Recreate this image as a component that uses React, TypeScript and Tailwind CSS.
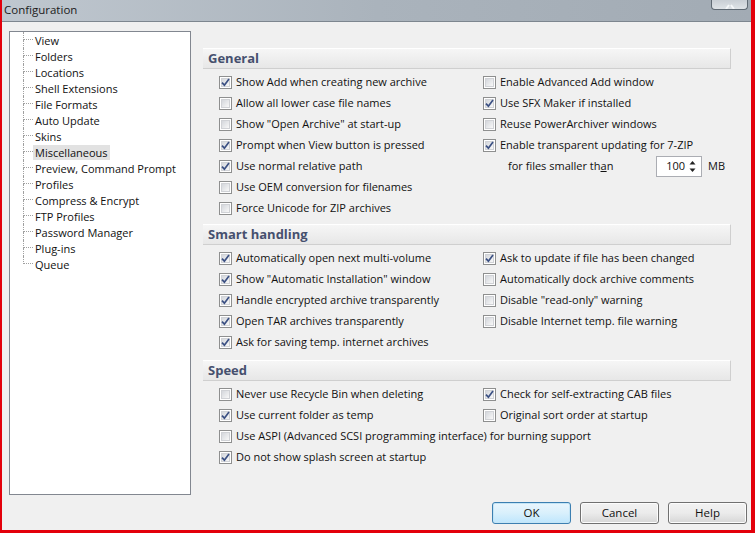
import type { ReactNode } from 'react';

const treeItems = [
  'View',
  'Folders',
  'Locations',
  'Shell Extensions',
  'File Formats',
  'Auto Update',
  'Skins',
  'Miscellaneous',
  'Preview, Command Prompt',
  'Profiles',
  'Compress & Encrypt',
  'FTP Profiles',
  'Password Manager',
  'Plug-ins',
  'Queue',
];

type Opt = [string, boolean];

const generalLeft: Opt[] = [
  ['Show Add when creating new archive', true],
  ['Allow all lower case file names', false],
  ['Show "Open Archive" at start-up', false],
  ['Prompt when View button is pressed', true],
  ['Use normal relative path', true],
  ['Use OEM conversion for filenames', false],
  ['Force Unicode for ZIP archives', false],
];

const generalRight: Opt[] = [
  ['Enable Advanced Add window', false],
  ['Use SFX Maker if installed', true],
  ['Reuse PowerArchiver windows', false],
  ['Enable transparent updating for 7-ZIP', true],
];

const smartLeft: Opt[] = [
  ['Automatically open next multi-volume', true],
  ['Show "Automatic Installation" window', true],
  ['Handle encrypted archive transparently', true],
  ['Open TAR archives transparently', true],
  ['Ask for saving temp. internet archives', true],
];

const smartRight: Opt[] = [
  ['Ask to update if file has been changed', true],
  ['Automatically dock archive comments', false],
  ['Disable "read-only" warning', false],
  ['Disable Internet temp. file warning', false],
];

function CheckBox({ checked }: { checked: boolean }) {
  return (
    <span className="flex h-[13px] w-[13px] shrink-0 border border-[#8e8f8f] bg-white p-px">
      <span className="relative flex h-full w-full items-center justify-center border border-[#d0d2d6] bg-linear-to-br from-[#d4d7dc] to-[#f8f8f8]">
        {checked && (
          <svg width="9" height="9" viewBox="0 0 9 9" className="overflow-visible">
            <path d="M1 4.6 L3.4 7.2 L8 1" fill="none" stroke="#3b5083" strokeWidth="1.7" />
          </svg>
        )}
      </span>
    </span>
  );
}

function Option({ label, checked }: { label: string; checked: boolean }) {
  return (
    <div className="flex h-[21px] items-center gap-[4px] whitespace-nowrap">
      <CheckBox checked={checked} />
      <span>{label}</span>
    </div>
  );
}

function Header({ title }: { title: string }) {
  return (
    <div className="flex h-[21px] items-center border-t border-t-white border-r border-b border-[#cfcfcf] bg-linear-to-b from-[#f6f6f6] to-[#e7e7e7] pl-[5px] text-[13px] font-bold text-[#46506e]">
      {title}
    </div>
  );
}

function Section({ title, children }: { title: string; children: ReactNode }) {
  return (
    <section>
      <Header title={title} />
      <div className="grid grid-cols-[264px_1fr] pt-[3px] pl-[16px]">{children}</div>
    </section>
  );
}

function Spinner() {
  return (
    <div className="flex h-[21px] w-[46px] items-center justify-end border border-[#abadb3] bg-white pr-[5px]">
      <span className="mr-[4px]">100</span>
      <svg width="7" height="13" viewBox="0 0 7 13">
        <path d="M3.5 1 L6.5 4.5 L0.5 4.5 Z" fill="#222" />
        <path d="M3.5 12 L6.5 8.5 L0.5 8.5 Z" fill="#222" />
      </svg>
    </div>
  );
}

function Button({ label, primary }: { label: string; primary?: boolean }) {
  return (
    <div
      className={`flex h-[22px] w-[79px] items-center justify-center rounded-[3px] border ${
        primary
          ? 'border-[#3c7fb1] bg-linear-to-b from-[#eaf6fd] via-[#d9f0fc] to-[#bee6fd] shadow-[inset_0_0_0_1px_#c4e5f6]'
          : 'border-[#707070] bg-linear-to-b from-[#f2f2f2] via-[#ebebeb] to-[#d6d6d6] shadow-[inset_0_0_0_1px_#fcfcfc]'
      }`}
    >
      {label}
    </div>
  );
}

function TreeRow({ label, last, selected }: { label: string; last: boolean; selected: boolean }) {
  return (
    <div className="flex h-[16px] items-stretch">
      <div className="ml-[13px] flex w-[10px] flex-col">
        <div className="h-[8px] border-b border-l border-dotted border-[#a0a0a0]" />
        <div className={`flex-1 ${last ? '' : 'border-l border-dotted border-[#a0a0a0]'}`} />
      </div>
      <div className="flex items-center">
        <span className={`px-[2px] leading-[15px] ${selected ? 'bg-[#e2e2e2]' : ''}`}>{label}</span>
      </div>
    </div>
  );
}

export default function App() {
  return (
    <div className="h-[533px] w-[755px] overflow-hidden bg-[#e3000b] pr-[4px] pb-[3px] pl-[2px] font-['Open_Sans','Noto_Sans',sans-serif] text-[11px] text-[#111]">
      <div className="flex h-full flex-col bg-[#f0f0f0]">
        {/* title bar */}
        <div className="flex h-[22px] shrink-0 items-start justify-between border-b border-[#7d868f] bg-linear-to-r from-[#bfc7cf] via-[#aab3bc] to-[#a2abb4] pl-[2px]">
          <span className="pt-[1px] text-[11.5px] text-[#1b1b1b]">Configuration</span>
          <div className="mr-[3px] flex h-[10px] w-[37px] items-end justify-center rounded-b-[4px] border border-t-0 border-[#5f6973] bg-linear-to-b from-[#c8ced4] to-[#dfe3e7]">
            <svg width="10" height="5" viewBox="0 0 10 5">
              <path d="M1 5 L4 1 M9 5 L6 1" stroke="#f4f6f8" strokeWidth="2" />
            </svg>
          </div>
        </div>

        <div className="flex flex-1 pt-[9px]">
          {/* tree */}
          <div className="ml-[7px] h-[464px] w-[182px] shrink-0 border border-[#828790] bg-white">
            {treeItems.map((t, i) => (
              <TreeRow
                key={t}
                label={t}
                last={i === treeItems.length - 1}
                selected={t === 'Miscellaneous'}
              />
            ))}
          </div>

          {/* options */}
          <div className="mr-[20px] ml-[12px] flex-1 pt-[17px]">
            <Section title="General">
              <div className="flex flex-col">
                {generalLeft.map(([l, c]) => (
                  <Option key={l} label={l} checked={c} />
                ))}
              </div>
              <div className="flex flex-col">
                {generalRight.map(([l, c]) => (
                  <Option key={l} label={l} checked={c} />
                ))}
                <div className="flex h-[21px] items-center pl-[25px]">
                  <span className="w-[148px]">
                    for files smaller th<u>a</u>n
                  </span>
                  <Spinner />
                  <span className="ml-[6px]">MB</span>
                </div>
              </div>
            </Section>

            <div className="mt-[5px]">
              <Section title="Smart handling">
                <div className="flex flex-col">
                  {smartLeft.map(([l, c]) => (
                    <Option key={l} label={l} checked={c} />
                  ))}
                </div>
                <div className="flex flex-col">
                  {smartRight.map(([l, c]) => (
                    <Option key={l} label={l} checked={c} />
                  ))}
                </div>
              </Section>
            </div>

            <div className="mt-[7px]">
              <Section title="Speed">
                <Option label="Never use Recycle Bin when deleting" checked={false} />
                <Option label="Check for self-extracting CAB files" checked />
                <Option label="Use current folder as temp" checked />
                <Option label="Original sort order at startup" checked={false} />
                <div className="col-span-2">
                  <Option
                    label="Use ASPI (Advanced SCSI programming interface) for burning support"
                    checked={false}
                  />
                </div>
                <div className="col-span-2">
                  <Option label="Do not show splash screen at startup" checked />
                </div>
              </Section>
            </div>
          </div>
        </div>

        {/* buttons */}
        <div className="flex shrink-0 justify-end gap-[9px] pt-[7px] pr-[4px] pb-[6px] text-[11.5px]">
          <Button label="OK" primary />
          <Button label="Cancel" />
          <Button label="Help" />
        </div>
      </div>
    </div>
  );
}
